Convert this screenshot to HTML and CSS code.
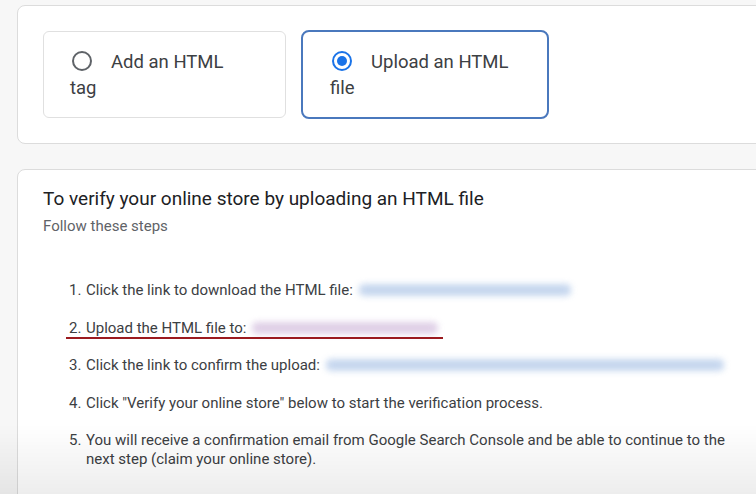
FILE: index.html
```html
<!DOCTYPE html>
<html>
<head>
<meta charset="utf-8">
<link rel="stylesheet" href="styles.css">
</head>
<body>
<div class="page">
  <section class="card card-options">
    <div class="options">
      <label class="option">
        <span class="radio"></span>Add an HTML tag
      </label>
      <label class="option option-selected">
        <span class="radio radio-on"><span class="dot"></span></span>Upload an HTML file
      </label>
    </div>
  </section>

  <section class="card card-steps">
    <h2 class="title">To verify your online store by uploading an HTML file</h2>
    <p class="subtitle">Follow these steps</p>
    <ol class="steps">
      <li class="step"><span class="num">1.</span><span class="txt">Click the link to download the HTML file: <span class="blur blur-blue w1"></span></span></li>
      <li class="step step-marked"><span class="num">2.</span><span class="txt">Upload the HTML file to: <span class="blur blur-purple w2"></span></span></li>
      <li class="step"><span class="num">3.</span><span class="txt">Click the link to confirm the upload: <span class="blur blur-blue w3"></span></span></li>
      <li class="step"><span class="num">4.</span><span class="txt">Click "Verify your online store" below to start the verification process.</span></li>
      <li class="step"><span class="num">5.</span><span class="txt">You will receive a confirmation email from Google Search Console and be able to continue to the next step (claim your online store).</span></li>
    </ol>
  </section>
</div>
<div class="vignette"></div>
</body>
</html>
```

FILE: styles.css
```css
html, body {
  margin: 0;
  padding: 0;
  background: #f7f7f7;
  overflow: hidden;
  height: 100%;
}
.page {
  padding: 5px 0 0 17px;
  width: 800px;
  font-family: Roboto, "Liberation Sans", Arial, sans-serif;
  color: #3c4043;
}
.card {
  background: #fff;
  border: 1px solid #dcdcdc;
  border-radius: 8px;
  box-sizing: border-box;
}
.card-options {
  height: 139px;
  padding: 25px 0 0 25px;
}
.options {
  display: flex;
  gap: 15px;
  align-items: flex-start;
}
.option {
  box-sizing: border-box;
  width: 243px;
  height: 87px;
  border: 1px solid #e0e0e0;
  border-radius: 6px;
  padding: 17px 45px 0 26px;
  font-size: 18.5px;
  line-height: 26px;
  color: #3c4043;
}
.option-selected {
  width: 248px;
  height: 89px;
  margin-top: -1px;
  border: 2px solid #4a78bd;
  border-radius: 8px;
  padding: 17px 30px 0 27px;
}
.radio {
  display: inline-block;
  box-sizing: border-box;
  width: 20px;
  height: 20px;
  border: 2px solid #5f6368;
  border-radius: 50%;
  vertical-align: -3px;
  margin: 0 19px 0 2px;
  position: relative;
}
.radio-on {
  border-color: #1a73e8;
}
.radio-on .dot {
  position: absolute;
  left: 3px;
  top: 3px;
  width: 10px;
  height: 10px;
  border-radius: 50%;
  background: #1a73e8;
}
.card-steps {
  margin-top: 25px;
  height: 400px;
  padding: 17px 0 0 25px;
}
.title {
  margin: 0;
  font-size: 19px;
  font-weight: 400;
  line-height: 24px;
  color: #202124;
}
.subtitle {
  margin: 5px 0 0;
  font-size: 15px;
  line-height: 20px;
  color: #5f6368;
}
.steps {
  list-style: none;
  margin: 45px 0 0;
  padding: 0 0 0 26px;
  font-size: 15px;
  line-height: 19px;
  color: #3c4043;
}
.step {
  display: flex;
  margin-bottom: 18.5px;
  position: relative;
  width: 680px;
}
.num {
  flex: 0 0 17px;
}
.txt {
  flex: 1;
}
.blur {
  display: inline-block;
  height: 12px;
  border-radius: 5px;
  vertical-align: -1px;
  filter: blur(3px);
  margin-left: 2px;
  opacity: 0.85;
}
.blur-blue { background: #bcd0ec; }
.blur-purple { background: #dac8e3; }
.w1 { width: 212px; }
.w2 { width: 186px; }
.w3 { width: 398px; }
.step-marked::after {
  content: "";
  position: absolute;
  left: -3px;
  top: 18px;
  width: 377px;
  height: 2px;
  background: #9b1a1f;
}
.vignette {
  position: fixed;
  left: 0;
  right: 0;
  bottom: 0;
  height: 70px;
  background: linear-gradient(to bottom, rgba(0,0,0,0), rgba(0,0,0,0.07));
  pointer-events: none;
}
```
